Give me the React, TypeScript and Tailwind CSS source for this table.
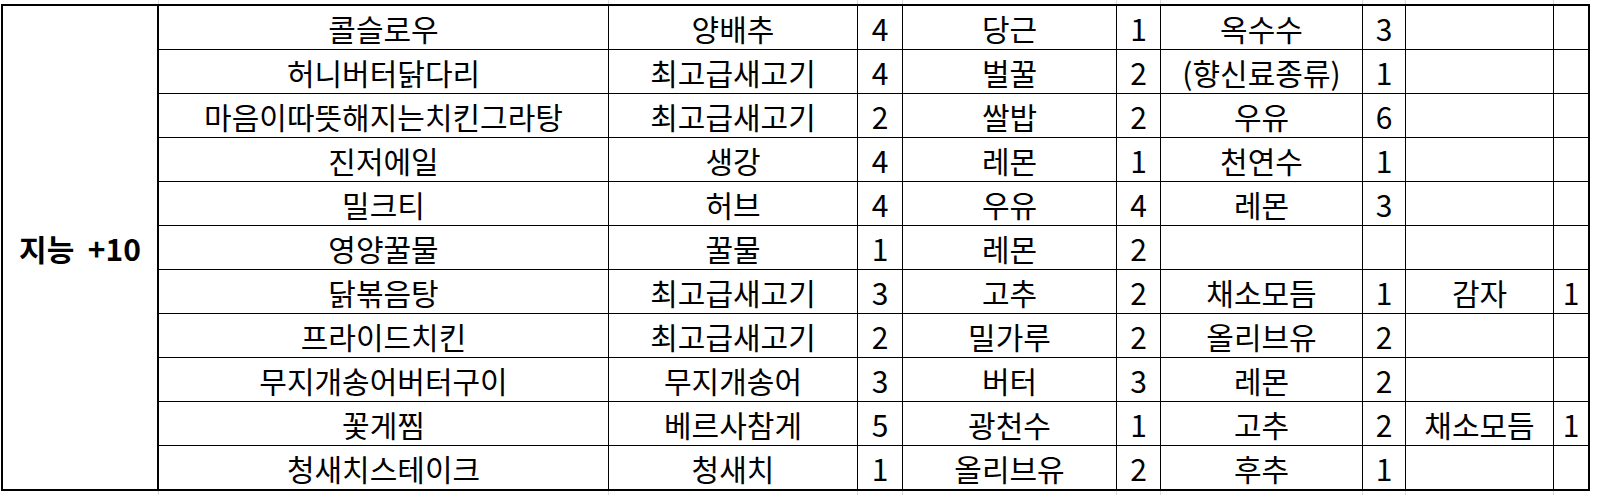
import React from "react";

const rows: string[][] = [
  ["콜슬로우", "양배추", "4", "당근", "1", "옥수수", "3", "", ""],
  ["허니버터닭다리", "최고급새고기", "4", "벌꿀", "2", "(향신료종류)", "1", "", ""],
  ["마음이따뜻해지는치킨그라탕", "최고급새고기", "2", "쌀밥", "2", "우유", "6", "", ""],
  ["진저에일", "생강", "4", "레몬", "1", "천연수", "1", "", ""],
  ["밀크티", "허브", "4", "우유", "4", "레몬", "3", "", ""],
  ["영양꿀물", "꿀물", "1", "레몬", "2", "", "", "", ""],
  ["닭볶음탕", "최고급새고기", "3", "고추", "2", "채소모듬", "1", "감자", "1"],
  ["프라이드치킨", "최고급새고기", "2", "밀가루", "2", "올리브유", "2", "", ""],
  ["무지개송어버터구이", "무지개송어", "3", "버터", "3", "레몬", "2", "", ""],
  ["꽃게찜", "베르사참게", "5", "광천수", "1", "고추", "2", "채소모듬", "1"],
  ["청새치스테이크", "청새치", "1", "올리브유", "2", "후추", "1", "", ""],
];

function Strip() {
  return (
    <div className="ml-[3px] grid h-[4px] w-fit grid-cols-[155px_449px_248px_44px_213px_43px_201px_42px_147px_34px] gap-x-px bg-[#dcdcdc]">
      {Array.from({ length: 10 }).map((_, i) => (
        <div key={i} className="bg-white" />
      ))}
    </div>
  );
}

export default function App() {
  return (
    <div className="h-[495px] w-[1601px] overflow-hidden bg-white font-['Noto_Sans_CJK_KR','Noto_Sans',sans-serif] text-black">
      <Strip />
      <div className="ml-[1px] w-fit border-2 border-black bg-black">
        <div className="grid grid-cols-[155px_449px_248px_44px_213px_43px_201px_42px_147px_34px] grid-rows-[repeat(11,43px)] gap-px">
          <div className="row-span-11 flex items-center justify-center border-r border-black bg-white text-[30px] font-bold leading-none">
            지능&nbsp; +10
          </div>
          {rows.map((r, ri) =>
            r.map((c, ci) => (
              <div
                key={`${ri}-${ci}`}
                className="flex items-center justify-center overflow-visible whitespace-nowrap bg-white text-[30px] leading-none"
              >
                {c}
              </div>
            ))
          )}
        </div>
      </div>
      <Strip />
    </div>
  );
}
